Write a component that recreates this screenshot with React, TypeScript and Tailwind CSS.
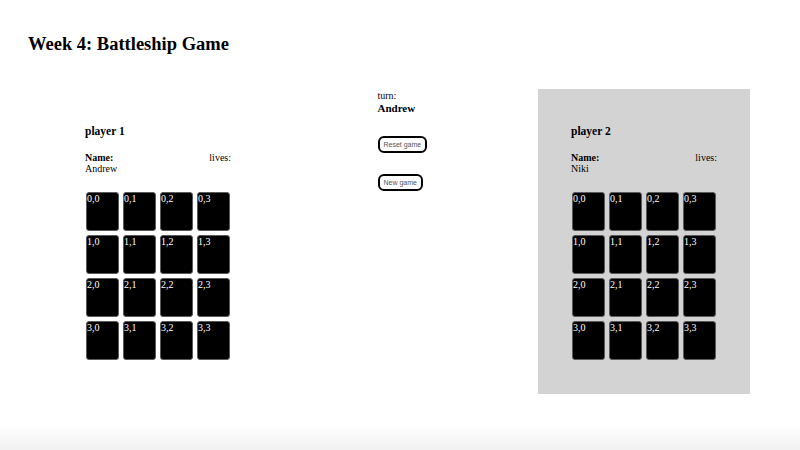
const cells = [0, 1, 2, 3].flatMap((r) => [0, 1, 2, 3].map((c) => `${r},${c}`));

function Board({ title, name, shaded }: { title: string; name: string; shaded?: boolean }) {
  return (
    <div className={`w-[212px] h-[305px] px-[33px] pt-[34px] ${shaded ? 'bg-[#d3d3d3]' : ''}`}>
      <h3 className="text-[11.5px] font-bold leading-[16px]">{title}</h3>
      <div className="mt-[13px] flex justify-between text-[10px] leading-[11px]">
        <div>
          <div className="font-bold">Name:</div>
          <div>{name}</div>
        </div>
        <div>lives:</div>
      </div>
      <div className="mt-[18px] grid grid-cols-[repeat(4,33px)] gap-x-[4px] gap-y-[4px] pl-[1px]">
        {cells.map((c) => (
          <div
            key={c}
            className="h-[39px] rounded-[3px] border-[1.5px] border-[#5a5a5a] bg-black text-white text-[10px] leading-[12px]"
          >
            {c}
          </div>
        ))}
      </div>
    </div>
  );
}

export default function App() {
  return (
    <div className="h-[450px] bg-[linear-gradient(to_bottom,#fff_calc(100%-26px),#f2f2f2)] font-['Liberation_Serif',serif] text-black">
      <h1 className="pl-[28px] pt-[34px] text-[18.5px] font-bold leading-[21px]">Week 4: Battleship Game</h1>
      <div className="mt-[34px] ml-[52px] w-[698px] flex justify-between items-start">
        <Board title="player 1" name="Andrew" />
        <div className="w-[47px] pt-[1px]">
          <div className="text-[10px] leading-[11px]">turn:</div>
          <div className="text-[11px] font-bold leading-[14px]">Andrew</div>
          <div className="mt-[21px] flex flex-col items-start gap-[21px] font-['Liberation_Sans',sans-serif]">
            <button className="h-[17px] px-[4px] whitespace-nowrap rounded-[6px] border-2 border-black text-[7px] leading-[13px] text-[#555]">Reset game</button>
            <button className="h-[17px] px-[4px] whitespace-nowrap rounded-[6px] border-2 border-black text-[7px] leading-[13px] text-[#555]">New game</button>
          </div>
        </div>
        <Board title="player 2" name="Niki" shaded />
      </div>
    </div>
  );
}
